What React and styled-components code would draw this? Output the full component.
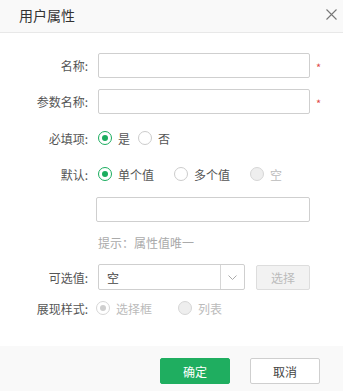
import React from "react";
import styled, { createGlobalStyle } from "styled-components";

const GlobalStyle = createGlobalStyle`
  body {
    margin: 0;
    background: #ffffff;
    font-family: "Noto Sans CJK SC", "Noto Sans", sans-serif;
  }
`;

export default function App() {
  return (
    <>
      <GlobalStyle />
      <Dialog>
        <Header>
          <Title>用户属性</Title>
          <Close>
            <svg width="11" height="11" viewBox="0 0 11 11">
              <path d="M0.5 0.5L10.5 10.5M10.5 0.5L0.5 10.5" stroke="#777" strokeWidth="1.1" />
            </svg>
          </Close>
        </Header>
        <Body>
          <Row h={25}>
            <Label>名称:</Label>
            <Field>
              <TextInput w={212} />
              <Required>*</Required>
            </Field>
          </Row>
          <Row h={25} mt={11}>
            <Label>参数名称:</Label>
            <Field>
              <TextInput w={212} />
              <Required>*</Required>
            </Field>
          </Row>
          <Row h={24} mt={12}>
            <Label>必填项:</Label>
            <Field gap={8}>
              <RadioItem>
                <Radio checked />
                <RadioText>是</RadioText>
              </RadioItem>
              <RadioItem>
                <Radio />
                <RadioText>否</RadioText>
              </RadioItem>
            </Field>
          </Row>
          <Row h={24} mt={12}>
            <Label>默认:</Label>
            <Field gap={20}>
              <RadioItem>
                <Radio checked />
                <RadioText>单个值</RadioText>
              </RadioItem>
              <RadioItem>
                <Radio />
                <RadioText>多个值</RadioText>
              </RadioItem>
              <RadioItem>
                <Radio disabled />
                <RadioText disabled>空</RadioText>
              </RadioItem>
            </Field>
          </Row>
          <Row h={25} mt={11}>
            <Label />
            <Field shift={-2}>
              <TextInput w={214} />
            </Field>
          </Row>
          <Row h={16} mt={12}>
            <Label />
            <Hint>提示：属性值唯一</Hint>
          </Row>
          <Row h={26} mt={14}>
            <Label>可选值:</Label>
            <Field gap={11}>
              <Select>
                <SelectValue>空</SelectValue>
                <SelectArrow>
                  <svg width="9" height="5" viewBox="0 0 9 5">
                    <path d="M0.5 0.5L4.5 4.5L8.5 0.5" fill="none" stroke="#aaa" strokeWidth="1" />
                  </svg>
                </SelectArrow>
              </Select>
              <GreyButton disabled>选择</GreyButton>
            </Field>
          </Row>
          <Row h={20} mt={8}>
            <Label>展现样式:</Label>
            <Field gap={26} shift={-2}>
              <RadioItem>
                <Radio checked disabled />
                <RadioText disabled>选择框</RadioText>
              </RadioItem>
              <RadioItem>
                <Radio disabled />
                <RadioText disabled>列表</RadioText>
              </RadioItem>
            </Field>
          </Row>
        </Body>
        <Footer>
          <Button primary>确定</Button>
          <Button>取消</Button>
        </Footer>
      </Dialog>
    </>
  );
}

function Radio({ checked, disabled }) {
  return (
    <RadioCircle checked={checked} disabled={disabled}>
      {checked ? <RadioDot disabled={disabled} /> : null}
    </RadioCircle>
  );
}

const Dialog = styled.div`
  width: 343px;
  height: 391px;
  display: flex;
  flex-direction: column;
  background: #fff;
`;

const Header = styled.div`
  height: 32px;
  display: flex;
  align-items: center;
  justify-content: space-between;
  padding: 0 6px 0 19px;
  background: #f9f9f9;
  border-bottom: 1px solid #e8e8e8;
`;

const Title = styled.div`
  font-size: 14px;
  color: #333;
  line-height: 1;
  margin-top: -2px;
`;

const Close = styled.div`
  width: 11px;
  height: 11px;
  display: flex;
  margin-right: 0;
  margin-top: -3px;
`;

const Body = styled.div`
  flex: 1;
  padding-top: 20px;
`;

const Row = styled.div`
  display: grid;
  grid-template-columns: 88px 1fr;
  column-gap: 10px;
  align-items: center;
  height: ${(p) => p.h}px;
  margin-top: ${(p) => p.mt || 0}px;
`;

const Label = styled.div`
  text-align: right;
  font-size: 12px;
  color: #555;
  white-space: nowrap;
`;

const Field = styled.div`
  display: flex;
  align-items: center;
  gap: ${(p) => p.gap || 0}px;
  margin-left: ${(p) => p.shift || 0}px;
  height: 100%;
`;

const TextInput = styled.input`
  box-sizing: border-box;
  width: ${(p) => p.w}px;
  height: 100%;
  border: 1px solid #cfcfcf;
  border-radius: 2px;
  outline: none;
  padding: 0 8px;
  font-family: inherit;
  font-size: 12px;
`;

const Required = styled.span`
  color: #e04a4a;
  font-size: 11px;
  margin-left: 6px;
  margin-top: 2px;
`;

const RadioItem = styled.label`
  display: flex;
  align-items: center;
  gap: 6px;
`;

const RadioCircle = styled.span`
  box-sizing: border-box;
  width: 14px;
  height: 14px;
  border-radius: 50%;
  display: flex;
  align-items: center;
  justify-content: center;
  border: 1px solid
    ${(p) => (p.disabled ? "#d6d6d6" : p.checked ? "#1aad5e" : "#cccccc")};
  background: ${(p) => (p.disabled && !p.checked ? "#eeeeee" : "#fff")};
`;

const RadioDot = styled.span`
  width: 6px;
  height: 6px;
  border-radius: 50%;
  background: ${(p) => (p.disabled ? "#cfcfcf" : "#1aad5e")};
`;

const RadioText = styled.span`
  font-size: 12px;
  color: ${(p) => (p.disabled ? "#bbbbbb" : "#555")};
`;

const Hint = styled.div`
  font-size: 12px;
  color: #aaa;
`;

const Select = styled.div`
  box-sizing: border-box;
  width: 147px;
  height: 100%;
  display: flex;
  border: 1px solid #cfcfcf;
  border-radius: 2px;
`;

const SelectValue = styled.div`
  flex: 1;
  display: flex;
  align-items: center;
  padding-left: 8px;
  font-size: 12px;
  color: #444;
`;

const SelectArrow = styled.div`
  width: 23px;
  border-left: 1px solid #d6d6d6;
  display: flex;
  align-items: center;
  justify-content: center;
`;

const GreyButton = styled.button`
  box-sizing: border-box;
  width: 54px;
  height: 25px;
  border: 1px solid #dddddd;
  border-radius: 2px;
  background: #f2f2f2;
  color: #bbb;
  font-family: inherit;
  font-size: 12px;
  padding: 0;
`;

const Footer = styled.div`
  height: 45px;
  background: #f9f9f9;
  display: flex;
  justify-content: flex-end;
  align-items: flex-start;
  gap: 20px;
  padding: 12px 23px 0 0;
  box-sizing: border-box;
`;

const Button = styled.button`
  box-sizing: border-box;
  width: 70px;
  height: 26px;
  border-radius: 2px;
  border: 1px solid ${(p) => (p.primary ? "#1fae60" : "#cfcfcf")};
  background: ${(p) => (p.primary ? "#1fae60" : "#fff")};
  color: ${(p) => (p.primary ? "#fff" : "#444")};
  font-family: inherit;
  font-size: 12px;
  padding: 0;
`;
